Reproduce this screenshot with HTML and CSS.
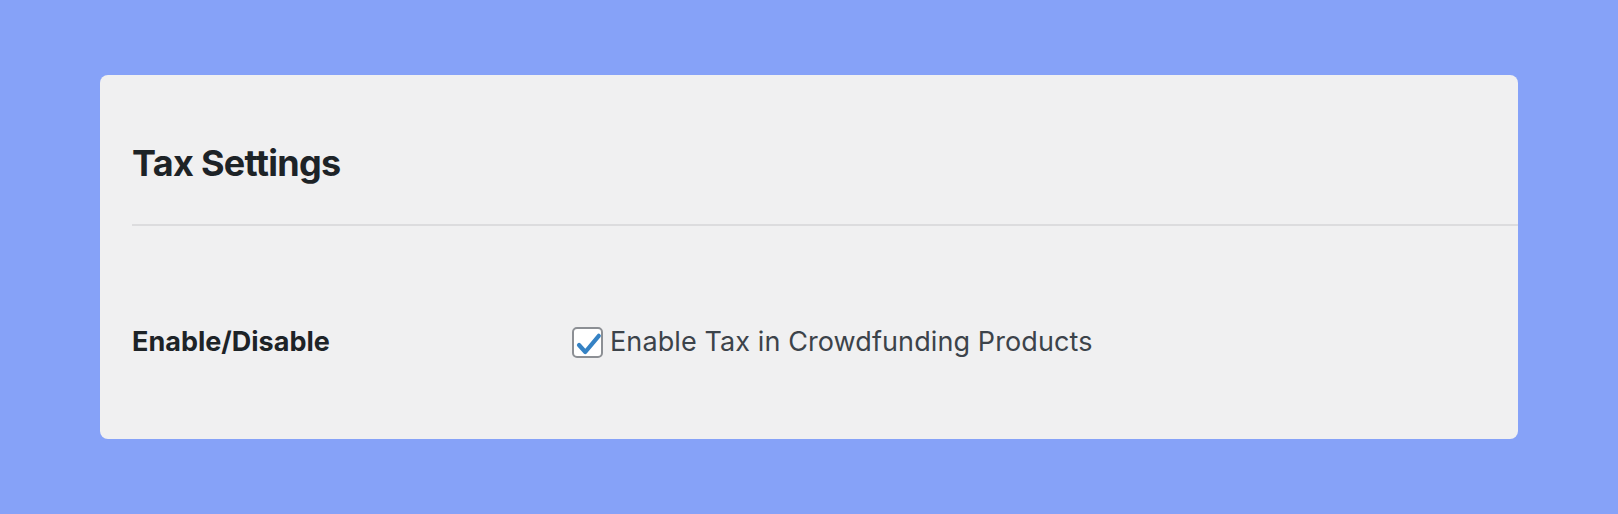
FILE: index.html
```html
<!DOCTYPE html>
<html lang="en">
<head>
  <meta charset="UTF-8">
  <meta name="viewport" content="width=device-width, initial-scale=1.0">
  <title>Tax Settings</title>
  <link rel="stylesheet" href="styles.css">
</head>
<body>
  <div class="card">
    <div class="card-head">
      <h2>Tax Settings</h2>
    </div>
    <div class="form-row">
      <div class="row-label">Enable/Disable</div>
      <label class="row-field">
        <span class="checkbox">
          <svg width="31" height="31" viewBox="0 0 31 31">
            <polyline points="7,18 13.3,25 26.8,8.8" fill="none" stroke="#3582c4" stroke-width="4.2" stroke-linecap="round" stroke-linejoin="round"/>
          </svg>
        </span>
        <span class="field-text">Enable Tax in Crowdfunding Products</span>
      </label>
    </div>
  </div>
</body>
</html>
```

FILE: styles.css
```css
body {
  margin: 0;
  padding: 75px 100px;
  background-color: #86a2f8;
  font-family: Inter, "Noto Sans", sans-serif;
  color: #1d2327;
}
.card {
  height: 364px;
  box-sizing: border-box;
  background-color: #f0f0f1;
  border-radius: 8px;
  padding-left: 32px;
  padding-top: 66px;
}
.card-head {
  border-bottom: 2px solid #dcdcde;
  padding-bottom: 39px;
}
h2 {
  margin: 0;
  font-size: 36px;
  line-height: 44px;
  font-weight: 700;
  letter-spacing: -0.7px;
}
.form-row {
  display: flex;
  align-items: center;
  margin-top: 100px;
  height: 32px;
}
.row-label {
  width: 440px;
  font-size: 27px;
  line-height: 32px;
  font-weight: 700;
}
.row-field {
  display: flex;
  align-items: center;
  gap: 7px;
}
.checkbox {
  width: 31px;
  height: 31px;
  box-sizing: border-box;
  border: 2px solid #8c8f94;
  border-radius: 5px;
  background-color: #fff;
  position: relative;
}
.checkbox svg {
  position: absolute;
  left: -2px;
  top: -2px;
}
.field-text {
  font-size: 27px;
  line-height: 32px;
  letter-spacing: 0.1px;
  color: #3c434a;
}
```
